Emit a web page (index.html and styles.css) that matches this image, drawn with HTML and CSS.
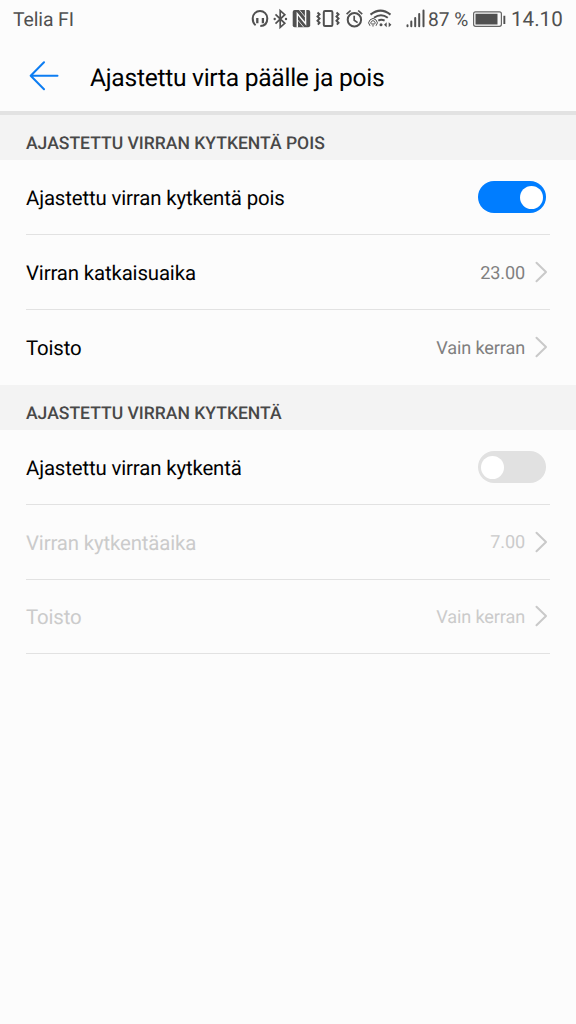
FILE: index.html
```html
<!DOCTYPE html>
<html lang="fi">
<head>
<meta charset="utf-8">
<title>Ajastettu virta päälle ja pois</title>
<link rel="stylesheet" href="styles.css">
</head>
<body>
<div class="status">
  <span class="carrier">Telia FI</span>
  <div class="status-right">
    <svg width="21" height="40" viewBox="250 0 21 40"><path class="line bold" d="M255.6 25.2C253.6 23.8 252.7 21.3 252.7 18.3A7.3 7.3 0 0 1 267.3 18.3C267.3 23 265.5 26 260.3 26"/><path class="line thick" d="M257.3 18v5.2M262.9 18v5.2"/></svg>
    <svg width="19" height="40" viewBox="271 0 19 40"><path class="line" d="M275.5 14.3l9.3 9-4.6 4V10.7l4.6 4-9.3 9"/><circle cx="274.7" cy="19" r="1.2"/><circle cx="286" cy="19" r="1.2"/></svg>
    <svg width="24" height="40" viewBox="290 0 24 40"><rect x="292.7" y="10" width="17.5" height="17.3" rx="2"/><path class="gap" d="M297.3 27.5V13.6L305.6 23.8V9.8"/><path class="gap thin" d="M299.4 10L305.6 17.5M297.3 19.5L303.8 27.3"/></svg>
    <svg width="28" height="40" viewBox="314 0 28 40"><rect class="line bold" x="323.8" y="11" width="8.6" height="14.9" rx="1.2"/><path class="line bold" d="M317.5 12.5l2 1.9-2 2.1 2 2.1-2 2.1 2 2.1-1.6 1.8M336.5 12.5l2 1.9-2 2.1 2 2.1-2 2.1 2 2.1-1.6 1.8"/></svg>
    <svg width="24" height="40" viewBox="342 0 24 40"><circle class="line bold" cx="354.4" cy="19.7" r="6.7"/><path class="line" d="M354.2 15.8v4.4l3.4 2.4M346.6 14.2l4-3.7M362.2 14.2l-4-3.7"/></svg>
    <svg width="38" height="40" viewBox="366 0 38 40"><path class="line bold" d="M370.5 14.6Q380.5 6.6 390.5 14.6M374 17.7Q381 12.6 387.8 17.7M378.3 20.6Q381.2 18.9 384.6 20.6"/><path class="fine" d="M370 25.8A4.2 4.2 0 1 1 376 25.8M371.6 24.4A2.1 2.1 0 1 1 374.4 24.4M373 23v3.6"/><circle cx="381" cy="24.8" r="1.5"/><path d="M384 24.8l2.7-2.5v5ZM391.4 24.8l-2.7-2.5v5Z"/></svg>
    <svg width="24" height="40" viewBox="404 0 24 40"><path class="bars" d="M407.5 26.2v-1M411.3 26.2v-4.6M415.2 26.2v-8.3M419.2 26.2v-12.2M423.5 26.2v-15.8"/></svg>
    <span class="percent">87 %</span>
    <svg width="36" height="40" viewBox="471 0 36 40"><rect class="shell" x="473.6" y="11.8" width="27.8" height="14.5" rx="2"/><path d="M475.5 13.8h22v10.7h-22zM503.4 15.8h1.9v8.2h-1.9z"/></svg>
    <span class="clock">14.10</span>
  </div>
</div>
<header class="header">
  <svg class="back" width="30" height="30" viewBox="0 0 30 30"><path d="M15 1.3L1.7 14.8L15 28.3M1.9 14.8H28.5"/></svg>
  <h1 class="title">Ajastettu virta päälle ja pois</h1>
</header>
<main>
  <h2 class="section">AJASTETTU VIRRAN KYTKENTÄ POIS</h2>
  <div class="group">
    <div class="row"><span class="label">Ajastettu virran kytkentä pois</span><span class="toggle on"><i class="knob"></i></span></div>
    <div class="row"><span class="label">Virran katkaisuaika</span><span class="value">23.00</span><svg class="chevron" width="13" height="22" viewBox="0 0 13 22"><path d="M1.5 1.7L11 11L1.5 20.3"/></svg></div>
    <div class="row last"><span class="label">Toisto</span><span class="value">Vain kerran</span><svg class="chevron" width="13" height="22" viewBox="0 0 13 22"><path d="M1.5 1.7L11 11L1.5 20.3"/></svg></div>
  </div>
  <h2 class="section">AJASTETTU VIRRAN KYTKENTÄ</h2>
  <div class="group">
    <div class="row"><span class="label">Ajastettu virran kytkentä</span><span class="toggle"><i class="knob"></i></span></div>
    <div class="row disabled"><span class="label">Virran kytkentäaika</span><span class="value">7.00</span><svg class="chevron" width="13" height="22" viewBox="0 0 13 22"><path d="M1.5 1.7L11 11L1.5 20.3"/></svg></div>
    <div class="row disabled"><span class="label">Toisto</span><span class="value">Vain kerran</span><svg class="chevron" width="13" height="22" viewBox="0 0 13 22"><path d="M1.5 1.7L11 11L1.5 20.3"/></svg></div>
  </div>
</main>
</body>
</html>
```
FILE: styles.css
```css
* { box-sizing: border-box; }
body { margin: 0; min-height: 1024px; background: #fcfcfc; color: #000; font-family: Roboto, sans-serif; text-rendering: geometricPrecision; }
svg { display: block; flex: none; }
.status { display: flex; justify-content: space-between; height: 40px; padding-left: 13px; color: #505050; font-size: 19px; line-height: 40px; white-space: nowrap; }
.carrier { font-size: 19.4px; letter-spacing: -0.1px; }
.status-right { display: flex; width: 326px; fill: #505050; }
.percent { width: 43px; font-size: 19.2px; }
.clock { margin-left: 4px; font-size: 20.6px; line-height: 40px; }
.line { fill: none; stroke: #505050; stroke-width: 1.7; }
.bold { stroke-width: 2; }
.thick { stroke-width: 2.3; }
.gap { fill: none; stroke: #fcfcfc; stroke-width: 1.4; }
.thin { stroke-width: 0.8; }
.fine { fill: none; stroke: #505050; stroke-width: 1; }
.bars { stroke: #505050; stroke-width: 2; stroke-linecap: round; }
.shell { fill: none; stroke: #666; stroke-width: 1.2; }
.header { display: flex; align-items: center; height: 75px; padding: 1px 29px 0; border-bottom: 4px solid #e2e2e2; }
.back { fill: none; stroke: #0d7df2; stroke-width: 2; stroke-linecap: round; stroke-linejoin: round; }
.title { margin: 5px 0 0 31px; font-size: 24.6px; font-weight: 400; line-height: 30px; letter-spacing: -0.28px; white-space: nowrap; }
.section { height: 45.4px; margin: 0; padding: 8px 26px 0; background: #f3f3f3; color: #484848; font-size: 17.55px; font-weight: 500; line-height: 43px; white-space: nowrap; }
.group { padding: 0 26px; }
.row { display: flex; align-items: center; height: 74.7px; border-bottom: 1px solid #e2e2e2; }
.row.last { height: 75px; border-bottom-color: transparent; }
.label { flex: 1; padding-top: 2px; font-size: 20.4px; letter-spacing: -0.14px; }
.value { padding-top: 2.6px; color: #808080; font-size: 18.1px; letter-spacing: -0.13px; }
.chevron { margin: 0 2px 0 10px; fill: none; stroke: #c9c9c9; stroke-width: 2; stroke-linecap: round; stroke-linejoin: round; }
.toggle { display: flex; width: 68px; height: 32px; margin-right: 4px; padding: 4.5px 3px; border-radius: 16px; background: #e1e1e1; }
.toggle.on { justify-content: flex-end; background: #007dff; }
.knob { width: 23px; height: 23px; border-radius: 50%; background: #fff; }
.disabled .label, .disabled .value { color: #cbcbcb; }
```
